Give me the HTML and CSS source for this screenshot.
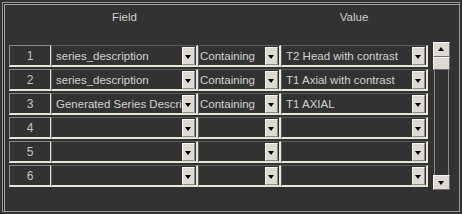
FILE: index.html
```html
<!DOCTYPE html>
<html lang="en">
<head>
    <meta charset="UTF-8">
    <title>Query filter</title>
    <link rel="stylesheet" href="styles.css">
</head>
<body>
    <div class="frame">
        <div class="head">
            <span class="hNum"></span>
            <span class="hField">Field</span>
            <span class="hCond"></span>
            <span class="hValue">Value</span>
        </div>

        <div class="body">
            <div class="rows">
                <div class="row">
                    <div class="num">1</div>
                    <div class="combo field"><span class="txt">series_description</span><span class="btn"></span></div>
                    <div class="combo cond"><span class="txt">Containing</span><span class="btn"></span></div>
                    <div class="combo value"><span class="txt">T2 Head with contrast</span><span class="btn"></span></div>
                </div>
                <div class="row">
                    <div class="num">2</div>
                    <div class="combo field"><span class="txt">series_description</span><span class="btn"></span></div>
                    <div class="combo cond"><span class="txt">Containing</span><span class="btn"></span></div>
                    <div class="combo value"><span class="txt">T1 Axial with contrast</span><span class="btn"></span></div>
                </div>
                <div class="row">
                    <div class="num">3</div>
                    <div class="combo field"><span class="txt">Generated Series Descri</span><span class="btn"></span></div>
                    <div class="combo cond"><span class="txt">Containing</span><span class="btn"></span></div>
                    <div class="combo value"><span class="txt">T1 AXIAL</span><span class="btn"></span></div>
                </div>
                <div class="row">
                    <div class="num">4</div>
                    <div class="combo field"><span class="txt"></span><span class="btn"></span></div>
                    <div class="combo cond"><span class="txt"></span><span class="btn"></span></div>
                    <div class="combo value"><span class="txt"></span><span class="btn"></span></div>
                </div>
                <div class="row">
                    <div class="num">5</div>
                    <div class="combo field"><span class="txt"></span><span class="btn"></span></div>
                    <div class="combo cond"><span class="txt"></span><span class="btn"></span></div>
                    <div class="combo value"><span class="txt"></span><span class="btn"></span></div>
                </div>
                <div class="row">
                    <div class="num">6</div>
                    <div class="combo field"><span class="txt"></span><span class="btn"></span></div>
                    <div class="combo cond"><span class="txt"></span><span class="btn"></span></div>
                    <div class="combo value"><span class="txt"></span><span class="btn"></span></div>
                </div>
            </div>

            <!-- 스크롤바 -->
            <div class="sbar">
                <span class="sBtn up"></span>
                <span class="thumb"></span>
                <span class="track"></span>
                <span class="sBtn down"></span>
            </div>
        </div>
    </div>
</body>
</html>
```

FILE: styles.css
```css
/* 초기화 */
html, body{
    margin: 0;
    padding: 0;
}
body{
    width: 462px;
    height: 214px;
    background: #323232;
    font-family: "Liberation Sans", Arial, sans-serif;
    font-size: 11.5px;
    color: #cfcfcf;
    overflow: hidden;
}

/* 바깥 테두리 */
.frame{
    box-sizing: border-box;
    width: 458px;
    height: 210px;
    margin: 2px;
    border: 1px solid #9a9a9a;
    box-shadow: inset 1px 1px 0 #1e1e1e, inset 2px 2px 0 #a8a8a8;
    padding: 0 0 0 6px;
}

/* 헤더 */
.head{
    display: flex;
    height: 40px;
    padding-top: 8px;
    box-sizing: border-box;
}
.hNum{ width: 42px; }
.hField{ width: 147px; text-align: center; }
.hCond{ width: 83px; }
.hValue{ width: 146px; text-align: center; }

.body{
    display: flex;
    margin-top: 2px;
}
.rows{
    display: flex;
    flex-direction: column;
    gap: 2px;
}

/* 한 줄 */
.row{
    display: flex;
    height: 22px;
}
.num{
    box-sizing: border-box;
    width: 42px;
    height: 22px;
    border-top: 1px solid #8a8a8a;
    border-left: 1px solid #8a8a8a;
    border-right: 1px solid #e6e6de;
    border-bottom: 2px solid #e6e6de;
    text-align: center;
    line-height: 20px;
    color: #c4c4c4;
    font-size: 12px;
}

.combo{
    box-sizing: border-box;
    display: flex;
    height: 22px;
    border-top: 1px solid #5a5a5a;
    border-left: 1px solid #5a5a5a;
    border-right: 2px solid #e6e6de;
    border-bottom: 2px solid #e6e6de;
    padding: 1px 1px 1px 0;
}
.field{ width: 147px; }
.cond{ width: 83px; }
.value{ width: 147px; }

.txt{
    flex: 1;
    overflow: hidden;
    white-space: nowrap;
    padding-left: 4px;
    line-height: 18px;
    color: #d2d2d2;
}
.cond .txt{ padding-left: 1px; }

/* 드롭다운 버튼 */
.btn{
    position: relative;
    box-sizing: border-box;
    width: 13px;
    height: 18px;
    background: #dcdad2;
    border-top: 1px solid #f4f4f0;
    border-left: 1px solid #f4f4f0;
    border-right: 1px solid #8a8a86;
    border-bottom: 1px solid #8a8a86;
}
.btn::after{
    content: '';
    position: absolute;
    left: 2px;
    top: 7px;
    border-left: 3px solid transparent;
    border-right: 3px solid transparent;
    border-top: 4px solid #000;
}

/* 스크롤바 */
.sbar{
    display: flex;
    flex-direction: column;
    width: 17px;
    height: 148px;
    margin-left: 5px;
    margin-top: -3px;
}
.sBtn{
    position: relative;
    box-sizing: border-box;
    height: 15px;
    background: #dcdad2;
    border: 1px solid #f4f4f0;
    border-right-color: #707070;
    border-bottom-color: #707070;
}
.sBtn::after{
    content: '';
    position: absolute;
    left: 4px;
    border-left: 3px solid transparent;
    border-right: 3px solid transparent;
}
.up::after{
    top: 4px;
    border-bottom: 4px solid #000;
}
.down::after{
    top: 5px;
    border-top: 4px solid #000;
}
.thumb{
    box-sizing: border-box;
    height: 13px;
    background: #dcdad2;
    border: 1px solid #f4f4f0;
    border-right-color: #707070;
    border-bottom-color: #707070;
}
.track{
    flex: 1;
    border-left: 1px solid #8a8a8a;
    border-right: 1px solid #8a8a8a;
    margin: 0 1px;
}
```
